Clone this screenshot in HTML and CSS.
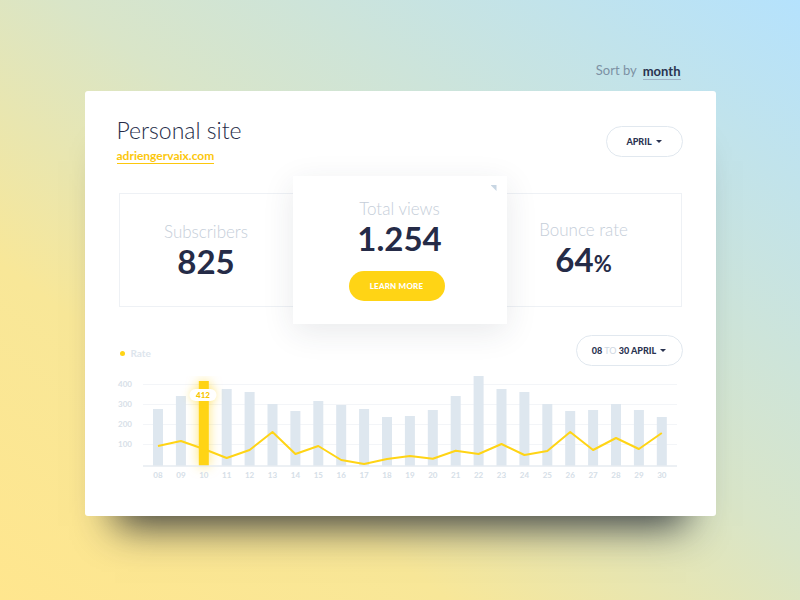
FILE: index.html
```html
<!DOCTYPE html>
<html lang="en">
<head>
    <meta charset="UTF-8">
    <title>Personal site stats</title>
    <link rel="stylesheet" href="styles.css">
</head>
<body>
    <div class="page">
        <div class="sort">Sort by <span class="sort-value">month</span></div>

        <div class="card">
            <div class="card-head">
                <div>
                    <h1 class="site-title">Personal site</h1>
                    <a class="site-link" href="#">adriengervaix.com</a>
                </div>
                <button class="pill pill-month"><span>APRIL</span><span class="caret"></span></button>
            </div>

            <div class="stats">
                <div class="stat stat-left">
                    <div class="stat-label">Subscribers</div>
                    <div class="stat-value">825</div>
                </div>
                <div class="stat-main">
                    <span class="corner"></span>
                    <div class="stat-label">Total views</div>
                    <div class="stat-value">1.254</div>
                    <button class="btn-yellow">LEARN MORE</button>
                </div>
                <div class="stat stat-right">
                    <div class="stat-label">Bounce rate</div>
                    <div class="stat-value">64<span class="unit">%</span></div>
                </div>
            </div>

            <div class="chart-head">
                <div class="legend"><span class="dot"></span>Rate</div>
                <button class="pill pill-range"><span>08 <span class="muted">TO</span> 30 APRIL</span><span class="caret"></span></button>
            </div>

            <svg class="chart" width="566" height="110" viewBox="117 376 566 110">
                <g class="grid">
                    <line x1="143" y1="384.5" x2="677" y2="384.5"/>
                    <line x1="143" y1="404.5" x2="677" y2="404.5"/>
                    <line x1="143" y1="424.5" x2="677" y2="424.5"/>
                    <line x1="143" y1="444.5" x2="677" y2="444.5"/>
                </g>
                <g class="y-labels">
                    <text x="118" y="387">400</text>
                    <text x="118" y="407">300</text>
                    <text x="118" y="427">200</text>
                    <text x="118" y="447">100</text>
                </g>
                <g class="bars">
                    <rect x="153" y="409" width="10" height="57"/>
                    <rect x="175.9" y="396" width="10" height="70"/>
                    <rect x="221.7" y="389" width="10" height="77"/>
                    <rect x="244.6" y="392" width="10" height="74"/>
                    <rect x="267.5" y="404" width="10" height="62"/>
                    <rect x="290.4" y="411" width="10" height="55"/>
                    <rect x="313.3" y="401" width="10" height="65"/>
                    <rect x="336.2" y="405" width="10" height="61"/>
                    <rect x="359.1" y="409" width="10" height="57"/>
                    <rect x="382" y="417" width="10" height="49"/>
                    <rect x="404.9" y="416" width="10" height="50"/>
                    <rect x="427.8" y="410" width="10" height="56"/>
                    <rect x="450.7" y="396" width="10" height="70"/>
                    <rect x="473.6" y="375" width="10" height="91"/>
                    <rect x="496.5" y="389" width="10" height="77"/>
                    <rect x="519.4" y="392" width="10" height="74"/>
                    <rect x="542.3" y="404" width="10" height="62"/>
                    <rect x="565.2" y="411" width="10" height="55"/>
                    <rect x="588.1" y="410" width="10" height="56"/>
                    <rect x="611" y="404" width="10" height="62"/>
                    <rect x="633.9" y="410" width="10" height="56"/>
                    <rect x="656.8" y="417" width="10" height="49"/>
                </g>
                <rect class="bar-active" x="198.8" y="381" width="10" height="85"/>
                <line class="baseline" x1="143" y1="466" x2="677" y2="466"/>
                <polyline class="rate-line" points="158,446 180.9,441 203.8,449 226.7,458 249.6,450 272.5,432 295.4,454 318.3,446 341.2,460 364.1,464 387,459 409.9,456 432.8,458.7 455.7,450.7 478.6,454 501.5,444 524.4,455 547.3,451 570.2,432 593.1,450 616,438 638.9,449 661.8,433"/>
                <rect class="tip" x="189.5" y="389" width="27" height="12" rx="6"/>
                <text class="tip-text" x="203" y="398">412</text>
                <g class="x-labels">
                    <text x="158" y="478">08</text>
                    <text x="180.9" y="478">09</text>
                    <text x="203.8" y="478">10</text>
                    <text x="226.7" y="478">11</text>
                    <text x="249.6" y="478">12</text>
                    <text x="272.5" y="478">13</text>
                    <text x="295.4" y="478">14</text>
                    <text x="318.3" y="478">15</text>
                    <text x="341.2" y="478">16</text>
                    <text x="364.1" y="478">17</text>
                    <text x="387" y="478">18</text>
                    <text x="409.9" y="478">19</text>
                    <text x="432.8" y="478">20</text>
                    <text x="455.7" y="478">21</text>
                    <text x="478.6" y="478">22</text>
                    <text x="501.5" y="478">23</text>
                    <text x="524.4" y="478">24</text>
                    <text x="547.3" y="478">25</text>
                    <text x="570.2" y="478">26</text>
                    <text x="593.1" y="478">27</text>
                    <text x="616" y="478">28</text>
                    <text x="638.9" y="478">29</text>
                    <text x="661.8" y="478">30</text>
                </g>
            </svg>
        </div>
    </div>
</body>
</html>
```

FILE: styles.css
```css
body {
    margin: 0;
    height: 600px;
    overflow: hidden;
    font-family: Lato, "Liberation Sans", sans-serif;
    background: linear-gradient(to top right, #ffe68e 0%, #f8e798 28%, #d9e5c8 54%, #b5e2fd 100%);
}
.page {
    width: 631px;
    margin: 0 auto;
    padding-top: 60px;
}
.sort {
    height: 20px;
    margin-bottom: 11px;
    padding-right: 35px;
    display: flex;
    justify-content: flex-end;
    align-items: center;
    gap: 6px;
    font-size: 13px;
    color: #7d91a4;
}
.sort-value {
    font-weight: 700;
    color: #2a3350;
    line-height: 15px;
    margin-top: 3px;
    border-bottom: 1px solid #9fb3c6;
}
.card {
    background: white;
    border-radius: 3px;
    padding: 27px 33px 30px 32px;
    box-shadow: 0 40px 38px -30px rgba(25, 30, 45, 0.85);
}
.card-head {
    height: 44px;
    display: flex;
    justify-content: space-between;
    align-items: center;
}
.site-title {
    margin: 0;
    font-size: 23px;
    line-height: 28px;
    font-weight: 300;
    color: #252b47;
}
.site-link {
    display: inline-block;
    font-size: 12px;
    line-height: 14px;
    font-weight: 700;
    color: #fcc70c;
    text-decoration: none;
    border-bottom: 1px solid #fcc70c;
}
.pill {
    height: 31px;
    padding: 0;
    border: 1px solid #e1e8ef;
    border-radius: 16px;
    background: white;
    font-family: Lato, "Liberation Sans", sans-serif;
    font-size: 9px;
    font-weight: 900;
    color: #2a3350;
    white-space: nowrap;
    display: flex;
    justify-content: center;
    align-items: center;
    gap: 4px;
}
.pill-month {
    width: 77px;
    margin-top: 3px;
}
.pill-range {
    width: 107px;
}
.muted {
    color: #cfd8e2;
    font-weight: 400;
}
.caret {
    width: 0;
    height: 0;
    border-left: 3px solid transparent;
    border-right: 3px solid transparent;
    border-top: 3px solid #2a3350;
}
.stats {
    margin: 14px 1px 0 2px;
    display: grid;
    grid-template-columns: 174px 214px 175px;
}
.stat {
    margin: 17px 0;
    border: 1px solid #eef1f5;
    display: flex;
    flex-direction: column;
    justify-content: center;
    align-items: center;
}
.stat-left {
    border-right: none;
}
.stat-right {
    border-left: none;
    padding-right: 20px;
}
.stat-label {
    font-size: 17px;
    line-height: 22px;
    font-weight: 300;
    color: #c5ced9;
}
.stat-value {
    font-size: 33px;
    line-height: 36px;
    font-weight: 700;
    color: #252b47;
}
.unit {
    font-size: 22px;
    font-weight: 700;
}
.stat-main {
    position: relative;
    background: white;
    padding: 22px 0 23px;
    display: flex;
    flex-direction: column;
    align-items: center;
    box-shadow: 0 8px 30px rgba(40, 50, 70, 0.1);
}
.corner {
    position: absolute;
    top: 9px;
    right: 10px;
    width: 6px;
    height: 6px;
    background: #c8d6e3;
    clip-path: polygon(0 0, 100% 0, 100% 100%);
}
.btn-yellow {
    margin: 15px 6px 0 0;
    width: 96px;
    height: 30px;
    border: none;
    border-radius: 15px;
    background: #ffd415;
    color: white;
    font-family: Lato, "Liberation Sans", sans-serif;
    font-size: 8px;
    font-weight: 900;
    letter-spacing: 0.2px;
}
.chart-head {
    margin-top: 11px;
    display: flex;
    justify-content: space-between;
    align-items: center;
}
.legend {
    margin-left: 3px;
    padding-top: 5px;
    display: flex;
    align-items: center;
    gap: 6px;
    font-size: 10px;
    font-weight: 700;
    color: #dde5ed;
}
.dot {
    width: 5px;
    height: 5px;
    border-radius: 50%;
    background: #ffd415;
}
.chart {
    display: block;
    margin-top: 10px;
    font-family: Lato, "Liberation Sans", sans-serif;
}
.grid line {
    stroke: #f3f5f8;
    stroke-width: 1;
}
.baseline {
    stroke: #e6ebf0;
    stroke-width: 1.5;
}
.y-labels text {
    font-size: 8px;
    font-weight: 700;
    fill: #d7e0e8;
}
.x-labels text {
    font-size: 8px;
    font-weight: 700;
    fill: #d5dee7;
    text-anchor: middle;
}
.bars rect {
    fill: #dee7ef;
}
.bar-active {
    fill: #ffd415;
    filter: drop-shadow(0 0 6px rgba(255, 212, 21, 0.6));
}
.rate-line {
    fill: none;
    stroke: #ffd415;
    stroke-width: 2;
    stroke-linejoin: round;
}
.tip {
    fill: white;
    filter: drop-shadow(0 0 4px rgba(255, 212, 21, 0.35));
}
.tip-text {
    font-size: 8px;
    font-weight: 900;
    fill: #f7c500;
    text-anchor: middle;
}
```
